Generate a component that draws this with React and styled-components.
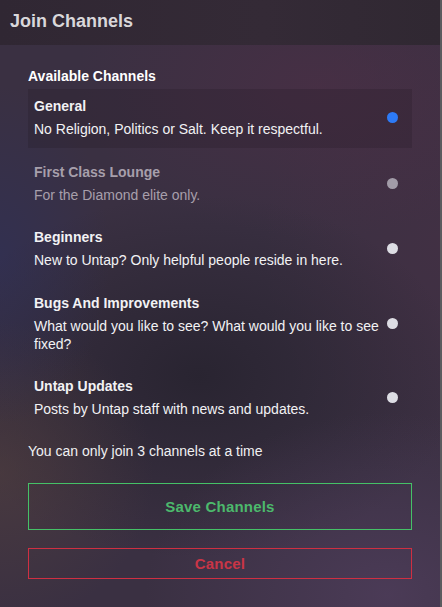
import React from 'react';
import styled, { createGlobalStyle } from 'styled-components';

const GlobalStyle = createGlobalStyle`
  html, body {
    margin: 0;
    padding: 0;
    background: #2f2733;
  }
  * {
    box-sizing: border-box;
  }
`;

const channels = [
  { name: 'General', desc: 'No Religion, Politics or Salt. Keep it respectful.', state: 'active' },
  { name: 'First Class Lounge', desc: 'For the Diamond elite only.', state: 'locked' },
  { name: 'Beginners', desc: 'New to Untap? Only helpful people reside in here.', state: 'off' },
  { name: 'Bugs And Improvements', desc: 'What would you like to see? What would you like to see fixed?', state: 'off' },
  { name: 'Untap Updates', desc: 'Posts by Untap staff with news and updates.', state: 'off' },
];

const JoinChannels = () => {
  return (
    <Panel>
      <Header>Join Channels</Header>
      <Body>
        <SectionTitle>Available Channels</SectionTitle>
        <List>
          {channels.map((c) => (
            <Row key={c.name} $active={c.state === 'active'} $locked={c.state === 'locked'}>
              <Info>
                <Name>{c.name}</Name>
                <Desc>{c.desc}</Desc>
              </Info>
              <Dot $state={c.state} />
            </Row>
          ))}
        </List>
        <Note>You can only join 3 channels at a time</Note>
        <Actions>
          <Button $color="#45c167" $text="#4cb96c" $height={47}>Save Channels</Button>
          <Button $color="#cf2f42" $text="#c93546" $height={31}>Cancel</Button>
        </Actions>
      </Body>
    </Panel>
  );
};

const Panel = styled.div`
  width: 442px;
  height: 607px;
  display: flex;
  flex-direction: column;
  font-family: "Liberation Sans", Arial, sans-serif;
  color: #f1f1f3;
  border-right: 2px solid #5b5b5f;
  overflow: hidden;
  background:
    radial-gradient(ellipse 55% 25% at 72% 14%, rgba(88, 46, 72, 0.4), transparent 100%),
    radial-gradient(ellipse 25% 28% at 0% 42%, rgba(44, 48, 92, 0.55), transparent 100%),
    radial-gradient(ellipse 35% 25% at 0% 78%, rgba(86, 66, 60, 0.5), transparent 100%),
    radial-gradient(ellipse 55% 30% at 88% 98%, rgba(86, 66, 100, 0.6), transparent 100%),
    radial-gradient(ellipse 60% 30% at 45% 62%, rgba(32, 30, 40, 0.65), transparent 100%),
    radial-gradient(ellipse 40% 40% at 100% 40%, rgba(76, 48, 70, 0.4), transparent 100%),
    #3a3042;
`;

const Header = styled.div`
  height: 45px;
  flex-shrink: 0;
  display: flex;
  align-items: center;
  padding: 0 10px 2px;
  background: linear-gradient(90deg, #30273 3, #342a36 60%, #30283 2);
  background: linear-gradient(90deg, #302733, #342a36 60%, #302832);
  color: #d9d7da;
  font-size: 18px;
  font-weight: 700;
`;

const Body = styled.div`
  flex: 1;
  display: flex;
  flex-direction: column;
  padding: 23px 28px 0 28px;
`;

const SectionTitle = styled.div`
  font-size: 14px;
  font-weight: 700;
  line-height: 16px;
  color: #ffffff;
  margin-bottom: 5px;
`;

const List = styled.div`
  display: flex;
  flex-direction: column;
  gap: 6.5px;
`;

const Row = styled.div`
  display: flex;
  align-items: center;
  padding: 8px 14px 10px 6px;
  background: ${(p) => (p.$active ? 'rgba(30, 22, 34, 0.22)' : 'transparent')};
  color: ${(p) => (p.$locked ? '#a79fab' : '#f2f2f4')};
`;

const Info = styled.div`
  flex: 1;
  min-width: 0;
`;

const Name = styled.div`
  font-size: 14px;
  font-weight: 700;
  line-height: 18px;
  margin-bottom: 5px;
`;

const Desc = styled.div`
  font-size: 14px;
  line-height: 18px;
`;

const dotColors = {
  active: '#2d7af6',
  locked: '#a29ca8',
  off: '#dddde4',
};

const Dot = styled.span`
  width: 11px;
  height: 11px;
  border-radius: 50%;
  margin-left: 4px;
  flex-shrink: 0;
  background: ${(p) => dotColors[p.$state]};
`;

const Note = styled.div`
  margin-top: 14px;
  font-size: 14px;
  line-height: 18px;
  color: #f0f0f2;
`;

const Actions = styled.div`
  display: flex;
  flex-direction: column;
  gap: 18px;
  margin-top: 23px;
`;

const Button = styled.button`
  appearance: none;
  height: ${(p) => p.$height}px;
  width: 100%;
  background: transparent;
  border: 1px solid ${(p) => p.$color};
  border-radius: 0;
  color: ${(p) => p.$text};
  font-family: "Liberation Sans", Arial, sans-serif;
  font-size: 15px;
  font-weight: 700;
  letter-spacing: 0.2px;
  cursor: pointer;
  padding: 0;
`;

export default function App() {
  return (
    <>
      <GlobalStyle />
      <JoinChannels />
    </>
  );
}
